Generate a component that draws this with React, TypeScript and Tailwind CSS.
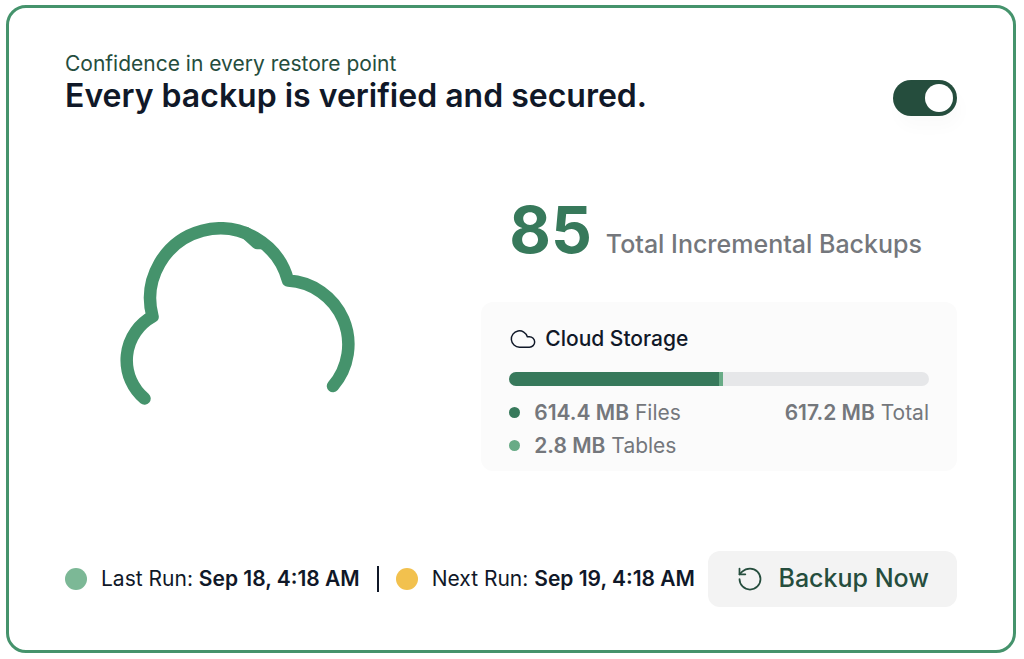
import { useState } from 'react'
import { Cloud, RotateCcw } from 'lucide-react'

const storage = [
  { label: 'Files', size: '614.4 MB', width: 50, color: 'bg-[#37795b]' },
  { label: 'Tables', size: '2.8 MB', width: 1, color: 'bg-[#68ab86]' },
]

function CloudArc() {
  return (
    <svg
      viewBox="0 0 236 184"
      className="w-[236px]"
      fill="none"
      stroke="#45936c"
      strokeWidth="12.5"
      strokeLinecap="round"
      strokeLinejoin="round"
      aria-hidden="true"
    >
      <path d="M25.5 176.5A50 50 0 0 1 33.5 94.5A70 70 0 1 1 169 58.5A64 64 0 0 1 214 164" />
      <path d="M127 11L138 21H142" />
    </svg>
  )
}

function BackupToggle() {
  const [enabled, setEnabled] = useState(true)

  return (
    <label className="relative block cursor-pointer">
      <input
        type="checkbox"
        role="switch"
        aria-label="Automatic backups"
        checked={enabled}
        onChange={(e) => setEnabled(e.target.checked)}
        className="peer block h-9 w-16 cursor-pointer appearance-none rounded-full bg-gray-300 shadow-[4px_12px_16px_rgba(0,0,0,0.02)] checked:bg-[#254d3d]"
      />
      <span className="pointer-events-none absolute top-1 left-1 size-7 rounded-full bg-white peer-checked:left-8" />
    </label>
  )
}

function StorageCard() {
  return (
    <section className="rounded-xl bg-[#fbfbfb] px-7 pt-[21px] pb-[9px]">
      <h2 className="flex items-center gap-2 text-[21px] leading-8 font-medium text-gray-900">
        <Cloud className="size-7" strokeWidth={1.25} />
        Cloud Storage
      </h2>
      <div className="mt-[17px] flex h-3.5 overflow-hidden rounded-full bg-[#e6e7e9]">
        {storage.map((item) => (
          <div key={item.label} className={item.color} style={{ width: `${item.width}%` }} />
        ))}
      </div>
      <div className="mt-2.5 flex justify-between text-[21px] leading-[33px] text-[#74777c]">
        <ul>
          {storage.map((item) => (
            <li key={item.label} className="flex items-center">
              <span className={`mr-3.5 size-[11px] rounded-full ${item.color}`} />
              <span>
                <strong className="font-semibold">{item.size}</strong> {item.label}
              </span>
            </li>
          ))}
        </ul>
        <p>
          <strong className="font-semibold">617.2 MB</strong> Total
        </p>
      </div>
    </section>
  )
}

function RunTime({ label, time, color }: { label: string; time: string; color: string }) {
  return (
    <div className="flex items-center gap-3.5 whitespace-nowrap">
      <span className={`size-[22px] rounded-full ${color}`} />
      <span>
        {label}: <strong className="font-semibold">{time}</strong>
      </span>
    </div>
  )
}

export default function App() {
  return (
    <div className="py-[5px] pr-2 pl-1.5 font-['Inter',sans-serif] text-gray-900">
      <main className="rounded-[20px] border-3 border-[#45936c] bg-white px-14 pt-10 pb-[43px]">
        <header className="flex items-end justify-between">
          <div>
            <p className="text-[21px] leading-8 text-[#254d3d]">Confidence in every restore point</p>
            <h1 className="pb-1 text-[32px] leading-8 font-semibold">Every backup is verified and secured.</h1>
          </div>
          <BackupToggle />
        </header>

        <div className="mt-20 grid grid-cols-[7fr_8fr] items-start">
          <div className="pt-[26px] pl-[54px]">
            <CloudArc />
          </div>
          <div>
            <p className="flex items-baseline gap-3.5 pl-7 text-[25px] font-medium whitespace-nowrap text-[#74777c]">
              <strong className="text-[64px] leading-[68px] font-bold text-[#37795b]">85</strong>
              Total Incremental Backups
            </p>
            <div className="mt-[38px]">
              <StorageCard />
            </div>
          </div>
        </div>

        <footer className="mt-20 flex items-center justify-between text-[21px]">
          <div className="flex items-center gap-[17px]">
            <RunTime label="Last Run" time="Sep 18, 4:18 AM" color="bg-[#7cb896]" />
            <span className="h-[26px] w-0.5 bg-gray-900" />
            <RunTime label="Next Run" time="Sep 19, 4:18 AM" color="bg-[#f2c14e]" />
          </div>
          <button
            type="button"
            className="flex h-14 items-center gap-3.5 rounded-xl bg-[#f3f3f3] px-7 text-[25px] font-medium whitespace-nowrap text-[#254d3d]"
          >
            <RotateCcw className="size-7" strokeWidth={1.5} />
            Backup Now
          </button>
        </footer>
      </main>
    </div>
  )
}
